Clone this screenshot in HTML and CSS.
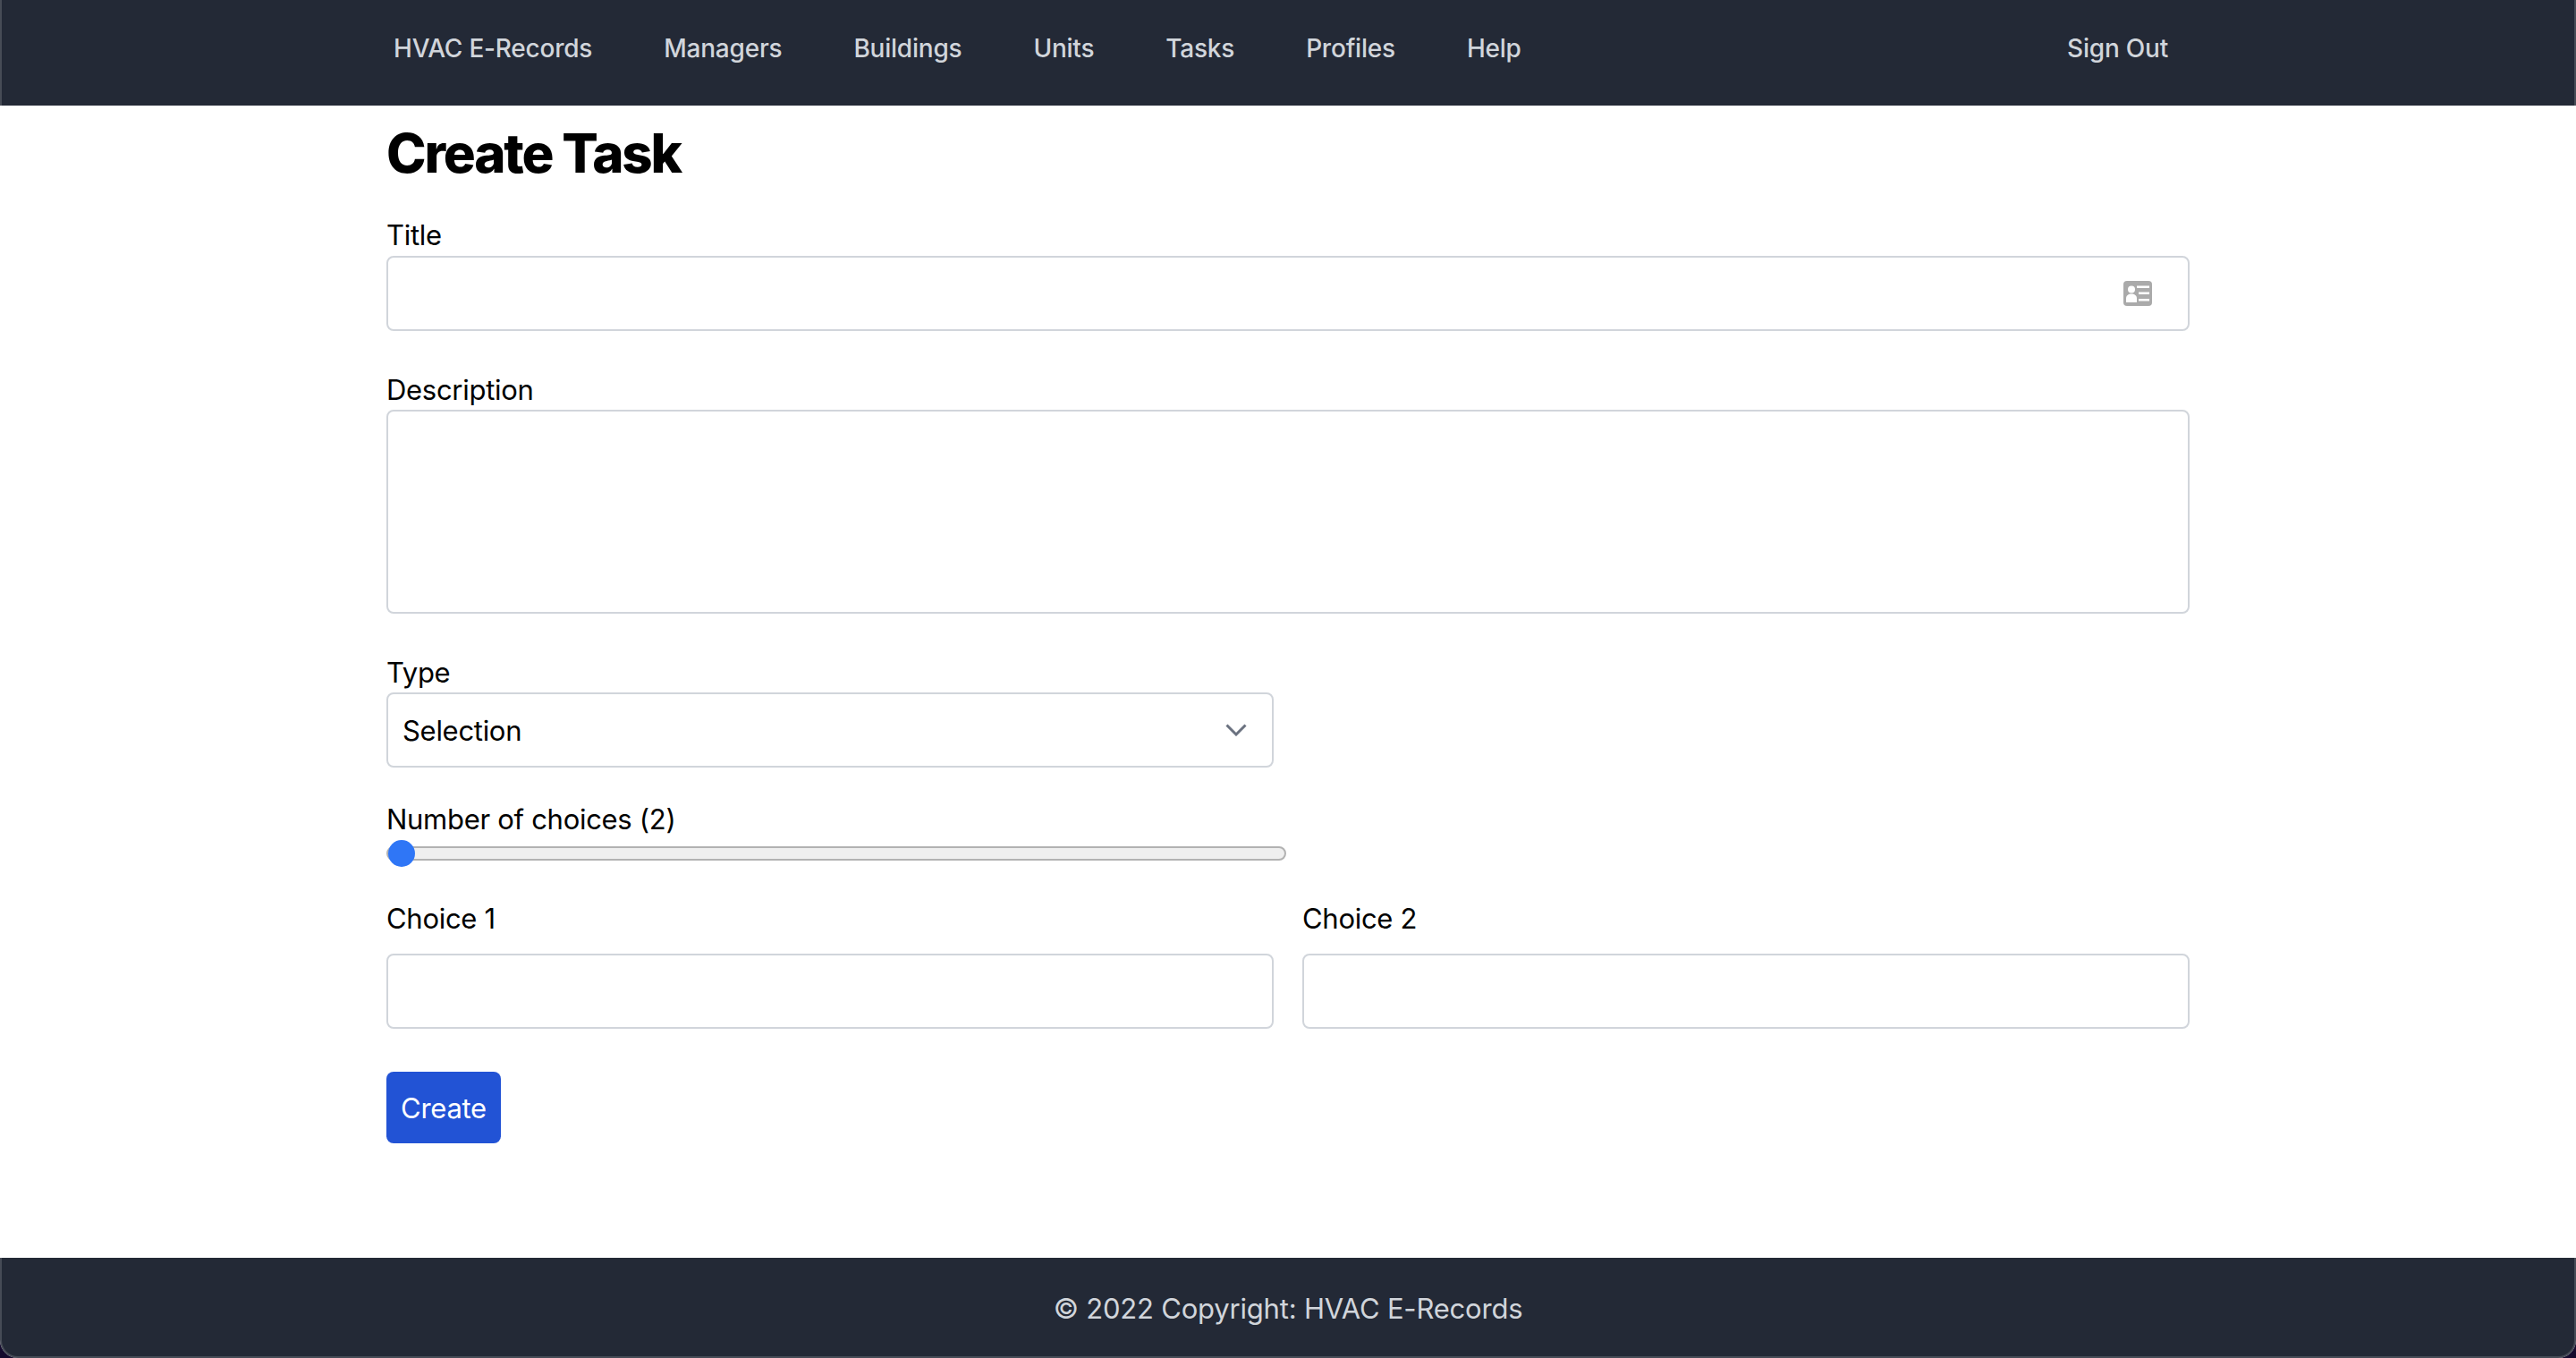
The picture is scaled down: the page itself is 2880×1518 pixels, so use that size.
FILE: index.html
```html
<!DOCTYPE html>
<html>

<head>
  <meta charset="UTF-8">
  <meta name="viewport" content="width=device-width, initial-scale=1.0">
  <title>Create Task - HVAC E-Records</title>
  <link rel="stylesheet" href="styles.css">
</head>

<body>
  <div id="page">
    <nav class="navbar">
      <div class="nav-inner">
        <div class="nav-links">
          <a href="#">HVAC E-Records</a>
          <a href="#">Managers</a>
          <a href="#">Buildings</a>
          <a href="#">Units</a>
          <a href="#">Tasks</a>
          <a href="#">Profiles</a>
          <a href="#">Help</a>
        </div>
        <a href="#">Sign Out</a>
      </div>
    </nav>

    <main class="content">
      <h1>Create Task</h1>
      <form>
        <div class="field field-title">
          <label for="title">Title</label>
          <div class="control">
            <input type="text" id="title">
            <svg class="contact-icon" width="32" height="28" viewBox="0 0 32 28">
              <rect width="32" height="28" rx="4" fill="#aaaaaa" />
              <circle cx="9" cy="9.500" r="4" fill="#fff" />
              <path d="M3 24v-4.500c0-3 2.500-5 6-5s6 2 6 5v4.500z" fill="#fff" />
              <path d="M15 5.500h14v2.500h-14zM17 12.500h12v2.500h-12zM17 20h12v2.500h-12z" fill="#fff" />
            </svg>
          </div>
        </div>

        <div class="field field-description">
          <label for="description">Description</label>
          <textarea id="description"></textarea>
        </div>

        <div class="half field field-type">
          <label for="type">Type</label>
          <div class="control">
            <select id="type">
              <option>Selection</option>
            </select>
            <svg class="chevron" width="24" height="14" viewBox="0 0 24 14">
              <path d="M1.500 1.500l10.500 10.500l10.500-10.500" fill="none" stroke="#6b7280" stroke-width="3" />
            </svg>
          </div>
        </div>

        <div class="field field-range">
          <label for="choices">Number of choices (2)</label>
          <input type="range" id="choices" min="2" max="10" value="2">
        </div>

        <div class="choices">
          <div>
            <label for="choice1">Choice 1</label>
            <input type="text" id="choice1">
          </div>
          <div>
            <label for="choice2">Choice 2</label>
            <input type="text" id="choice2">
          </div>
        </div>

        <button type="button">Create</button>
      </form>
    </main>

    <footer class="footer">© 2022 Copyright: HVAC E-Records</footer>
    <div class="window-edge"></div>
  </div>
</body>

</html>
```

FILE: styles.css
```css
html {
  background-color: #150b2e;
}

body {
  font-family: Inter, 'Liberation Sans', sans-serif;
  margin: 0;
  padding: 0;
  color: #000;
}

#page {
  position: relative;
  display: flex;
  flex-direction: column;
  height: 100vh;
  overflow: hidden;
  background-color: #fff;
  border-radius: 0 0 20px 20px;
}

.window-edge {
  position: absolute;
  top: 0;
  right: 0;
  bottom: 0;
  left: 0;
  border: 2px solid rgba(255, 255, 255, 0.16);
  border-top: none;
  border-radius: 0 0 20px 20px;
  pointer-events: none;
}

.navbar {
  height: 118px;
  flex-shrink: 0;
  background-color: #232936;
}

.nav-inner {
  width: 2016px;
  height: 108px;
  margin: 0 auto;
  display: flex;
  justify-content: space-between;
  align-items: center;
  padding: 0 24px 0 8px;
  box-sizing: border-box;
}

.nav-links {
  display: flex;
  gap: 80px;
}

.navbar a {
  color: #d1d5db;
  font-size: 28px;
  font-weight: 500;
  line-height: 40px;
  letter-spacing: -0.22px;
  text-decoration: none;
}

.content {
  flex: 1;
  width: 2016px;
  margin: 0 auto;
}

h1 {
  font-size: 60px;
  font-weight: 800;
  line-height: 72px;
  letter-spacing: -2.2px;
  margin: 17px 0 30px;
}

label {
  display: block;
  font-size: 31px;
  line-height: 44px;
  letter-spacing: -0.29px;
  padding-top: 4px;
}

input[type="text"],
textarea,
select {
  display: block;
  width: 100%;
  height: 84px;
  margin: 0;
  padding: 0 16px;
  box-sizing: border-box;
  font-family: inherit;
  font-size: 31px;
  letter-spacing: -0.29px;
  color: #000;
  background-color: #fff;
  border: 2px solid #d1d5db;
  border-radius: 8px;
  -webkit-appearance: none;
  appearance: none;
  resize: none;
}

textarea {
  height: 228px;
}

.control {
  position: relative;
}

.contact-icon {
  position: absolute;
  top: 28px;
  right: 42px;
}

.chevron {
  position: absolute;
  top: 35px;
  right: 30px;
}

.field {
  margin-bottom: 40px;
}

.half {
  width: 992px;
}

.field-title input {
  margin-top: 1px;
}

.field-type {
  margin-bottom: 32px;
}

.field-range {
  margin-bottom: 32px;
}

input[type="range"] {
  display: block;
  width: 1006px;
  height: 30px;
  margin: 1px 0 0;
  background: transparent;
  -webkit-appearance: none;
  appearance: none;
}

input[type="range"]::-webkit-slider-runnable-track {
  height: 16px;
  box-sizing: border-box;
  background-color: #efefef;
  border: 2px solid #b2b2b2;
  border-radius: 8px;
}

input[type="range"]::-webkit-slider-thumb {
  width: 30px;
  height: 30px;
  margin-top: -9px;
  background-color: #2f76f6;
  border-radius: 50%;
  -webkit-appearance: none;
}

.choices {
  display: grid;
  grid-template-columns: 992px 992px;
  gap: 32px;
}

.choices label {
  margin-bottom: 17px;
}

button {
  display: block;
  width: 128px;
  height: 80px;
  margin-top: 48px;
  padding: 0;
  font-family: inherit;
  font-size: 31px;
  letter-spacing: -0.29px;
  color: #fff;
  background-color: #2253d5;
  border: none;
  border-radius: 8px;
}

.footer {
  height: 112px;
  flex-shrink: 0;
  display: flex;
  justify-content: center;
  align-items: center;
  box-sizing: border-box;
  font-size: 31px;
  letter-spacing: -0.2px;
  color: #d1d5db;
  background-color: #232936;
}
```
